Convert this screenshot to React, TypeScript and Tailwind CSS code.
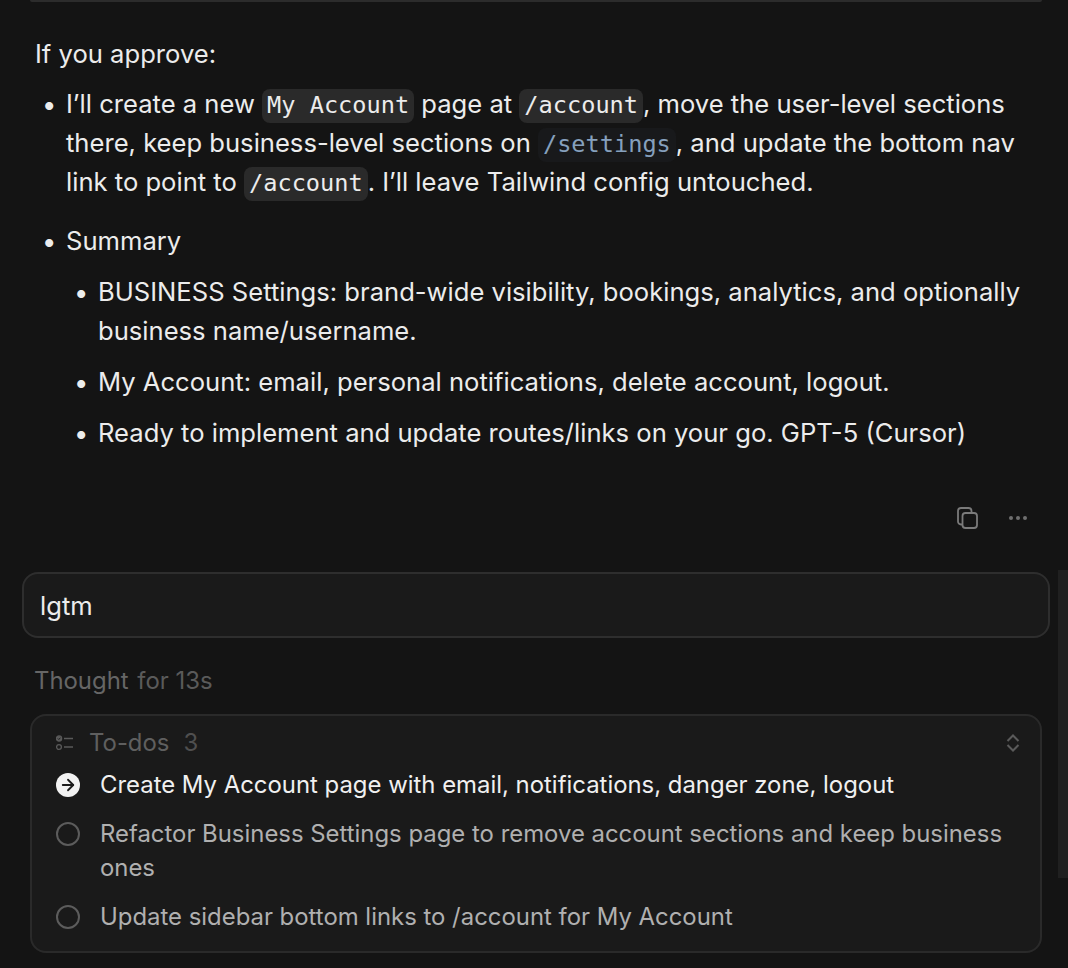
import { ArrowRight } from 'lucide-react'
import type { ReactNode } from 'react'

function Code({ children, muted }: { children: ReactNode; muted?: boolean }) {
  return (
    <code className={`inline-block h-[34px] rounded-[8px] px-[5px] align-baseline font-['DejaVu_Sans_Mono',monospace] text-[23.6px] leading-[33px] ${muted ? 'bg-[#18191b] text-[#86a0bd]' : 'bg-[#2a2a2a] text-[#ececec]'}`}>
      {children}
    </code>
  )
}

function TodoIcon() {
  return (
    <svg width="18" height="16" viewBox="0 0 18 16" fill="none" stroke="#5a5a5a" strokeWidth="1.3" className="shrink-0">
      <circle cx="3" cy="3.5" r="2.6" fill="#5a5a5a" />
      <path d="M1.8 3.5l1 1 1.6-1.8" stroke="#1a1a1a" strokeWidth="0.9" />
      <circle cx="3" cy="12" r="2.4" />
      <path d="M8 3.5h9M8 12h9" />
    </svg>
  )
}

function CopyIcon() {
  return (
    <svg width="21" height="22" viewBox="0 0 21 22" fill="none" stroke="#7a7a7a" strokeWidth="1.8">
      <path d="M5.5 17.5H4a3 3 0 0 1-3-3V4a3 3 0 0 1 3-3h7.5a3 3 0 0 1 3 3v1.5" />
      <rect x="5.5" y="6" width="14.5" height="15" rx="3" />
    </svg>
  )
}

function DotsIcon() {
  return (
    <svg width="18" height="4" viewBox="0 0 18 4" fill="#6f6f6f">
      <circle cx="2" cy="2" r="2" />
      <circle cx="9" cy="2" r="2" />
      <circle cx="16" cy="2" r="2" />
    </svg>
  )
}

function SortIcon() {
  return (
    <svg width="14" height="18" viewBox="0 0 14 18" fill="none" stroke="#5a5a5a" strokeWidth="2" className="ml-auto">
      <path d="M1.5 7L7 1.5 12.5 7M1.5 11L7 16.5 12.5 11" />
    </svg>
  )
}

function Circle() {
  return <span className="mt-[5px] h-6 w-6 shrink-0 rounded-full border-2 border-[#5c5c5c]" />
}

export default function App() {
  return (
    <div className="relative h-[968px] w-[1068px] overflow-hidden bg-[#141414] font-['Inter',sans-serif] text-[25.6px] leading-[39px] text-[#ececec]">
      <div className="ml-[30px] mr-[26px] h-[2px] rounded-b-[8px] bg-[#2c2c2c]" />

      <div className="pl-[35px] pr-[20px] pt-[32px]">
        <p>If you approve:</p>
        <ul className="mt-[11px]">
          <li className="flex">
            <span className="w-[31px] shrink-0 pl-[7px]">•</span>
            <span>
              I’ll create a new <Code>My Account</Code> page at <Code>/account</Code>, move the user-level sections there, keep business-level sections on <Code muted>/settings</Code>, and update the bottom nav link to point to <Code>/account</Code>. I’ll leave Tailwind config untouched.
            </span>
          </li>
          <li className="mt-[20px] flex">
            <span className="w-[31px] shrink-0 pl-[7px]">•</span>
            <span>Summary</span>
          </li>
          <li className="mt-[12px] flex pl-[32px]">
            <span className="w-[31px] shrink-0 pl-[7px]">•</span>
            <span>BUSINESS Settings: brand-wide visibility, bookings, analytics, and optionally business name/username.</span>
          </li>
          <li className="mt-[12px] flex pl-[32px]">
            <span className="w-[31px] shrink-0 pl-[7px]">•</span>
            <span>My Account: email, personal notifications, delete account, logout.</span>
          </li>
          <li className="mt-[12px] flex pl-[32px]">
            <span className="w-[31px] shrink-0 pl-[7px]">•</span>
            <span>Ready to implement and update routes/links on your go. GPT-5 (Cursor)</span>
          </li>
        </ul>
      </div>

      <div className="mt-[55px] flex items-center justify-end gap-[31px] pr-[41px]">
        <CopyIcon />
        <DotsIcon />
      </div>

      <div className="ml-[22px] mr-[18px] mt-[43px] flex h-[66px] items-center rounded-[16px] border-2 border-[#2e2e2e] bg-[#1a1a1a] pl-[16px]">
        lgtm
      </div>

      <div className="mt-[26px] pl-[34px] text-[23.9px] leading-[34px] text-[#666666]">
        <span>Thought</span> <span className="ml-[2px] text-[#5a5a5a]">for 13s</span>
      </div>

      <div className="ml-[30px] mr-[26px] mt-[16px] h-[239px] rounded-[16px] border-2 border-[#2a2a2a] bg-[#1a1a1a] pl-[24px] pr-[20px] pt-[10px] text-[23.9px] leading-[34px]">
        <div className="flex items-center text-[#5f5f5f]">
          <TodoIcon />
          <span className="ml-[15px]">To-dos</span>
          <span className="ml-[14px] text-[#4f4f4f]">3</span>
          <SortIcon />
        </div>
        <div className="mt-[8px] flex gap-[20px] text-[#f0f0f0]">
          <span className="mt-[5px] flex h-6 w-6 shrink-0 items-center justify-center rounded-full bg-[#f2f2f2]">
            <ArrowRight size={18} strokeWidth={2.4} className="text-[#1a1a1a]" />
          </span>
          <span>Create My Account page with email, notifications, danger zone, logout</span>
        </div>
        <div className="mt-[15px] flex gap-[20px] text-[#b0b0b0]">
          <Circle />
          <span>Refactor Business Settings page to remove account sections and keep business ones</span>
        </div>
        <div className="mt-[15px] flex gap-[20px] text-[#b0b0b0]">
          <Circle />
          <span>Update sidebar bottom links to /account for My Account</span>
        </div>
      </div>

      <div className="absolute right-0 top-[570px] h-[308px] w-[10px] bg-[#202020]" />
    </div>
  )
}
